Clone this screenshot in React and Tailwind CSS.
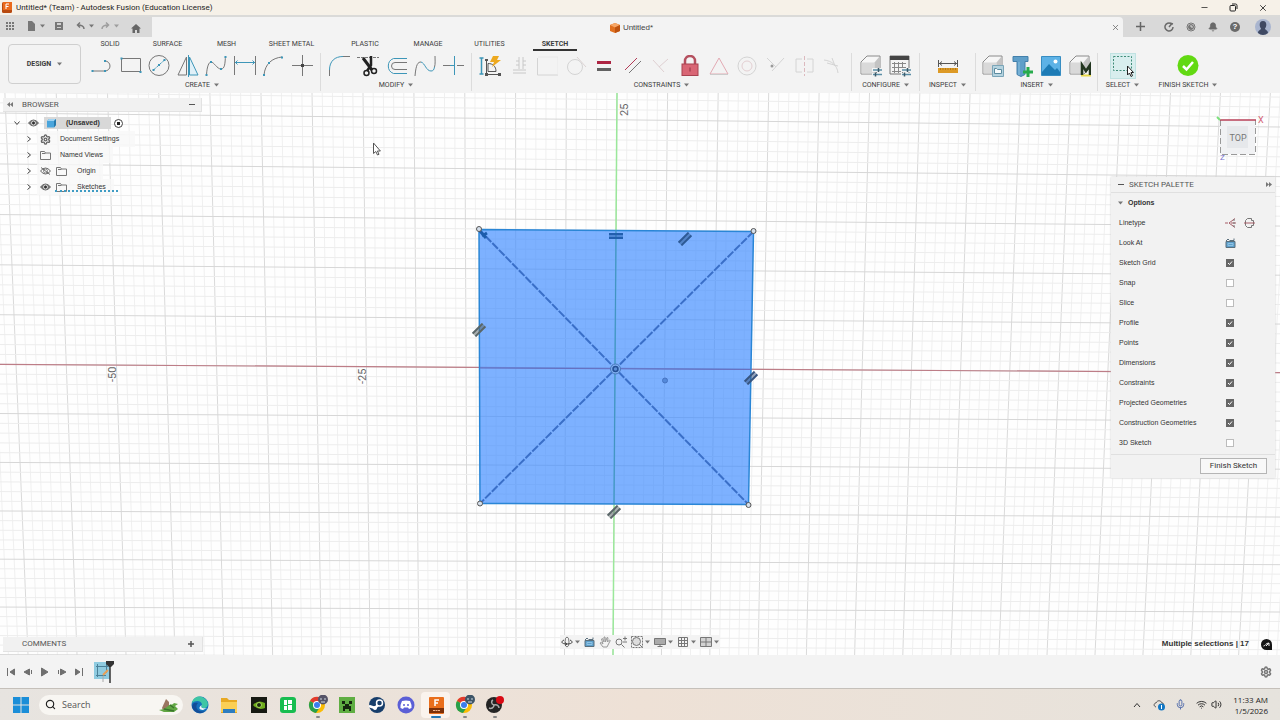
import { useState } from "react";
import { Bell, Mic, Minus, Search, Settings, Volume2, Wifi, X } from "lucide-react";

const TABS = [
  { name: "SOLID", width: "w-[56px]" },
  { name: "SURFACE", width: "w-[59px]" },
  { name: "MESH", width: "w-[59px]" },
  { name: "SHEET METAL", width: "w-[71px]" },
  { name: "PLASTIC", width: "w-[76px]" },
  { name: "MANAGE", width: "w-[50px]" },
  { name: "UTILITIES", width: "w-[73px]" },
];

const OPTIONS = [
  ["Sketch Grid", true],
  ["Snap", false],
  ["Slice", false],
  ["Profile", true],
  ["Points", true],
  ["Dimensions", true],
  ["Constraints", true],
  ["Projected Geometries", true],
  ["Construction Geometries", true],
  ["3D Sketch", false],
];

const BLUE = "#3d96b8";
const GREY = "#777";
const FAINT = "#d4d4d4";

function Caret({ className = "" }) {
  return (
    <svg viewBox="0 0 5 4" className={`w-[5px] h-1 shrink-0 ${className}`} fill="#777">
      <path d="M0 0.5h5L2.5 3.5z" />
    </svg>
  );
}

// toolbar icon on a 22px grid
function Tool({ label, children, active }) {
  return (
    <button
      aria-label={label}
      className={
        active
          ? "w-[26px] h-[26px] flex items-center justify-center bg-[#d8eeee] border border-[#c0e2e2]"
          : "w-[22px] h-[26px] flex items-center justify-center"
      }
    >
      <svg viewBox="0 0 22 22" className="w-[22px] h-[22px] shrink-0" fill="none" stroke={GREY} strokeWidth="1">
        {children}
      </svg>
    </button>
  );
}

function Group({ label, width, className = "", children }) {
  return (
    <div className={`flex flex-col items-center ${className}`}>
      <div className={`flex h-[26px] justify-between items-center ${width}`}>{children}</div>
      <button className="flex items-center gap-1 h-3 leading-3 whitespace-nowrap">
        {label}
        <Caret />
      </button>
    </div>
  );
}

function Dot({ x, y, color = BLUE }) {
  return <rect x={x - 1} y={y - 1} width="2" height="2" fill={color} stroke="none" />;
}

function CreateTools() {
  return (
    <>
      <Tool label="Line">
        <path d="M1 16h13a5 5 0 0 0 0-10" />
        <Dot x={1.5} y={16} /><Dot x={14} y={16} /><Dot x={14} y={6} />
      </Tool>
      <Tool label="Rectangle">
        <path d="M1.5 3.500h19v13h-19z" />
        <Dot x={1.5} y={3.5} /><Dot x={20.5} y={17} />
      </Tool>
      <Tool label="Circle">
        <circle cx="11" cy="10.500" r="10" />
        <path d="M5.500 15L16.500 5" stroke={BLUE} strokeDasharray="3 1" />
        <Dot x={5.5} y={15} /><Dot x={11} y={10} /><Dot x={16.5} y={5} />
      </Tool>
      <Tool label="Mirror">
        <path d="M9.500 2v18H1z" />
        <path d="M12.500 2v18H21z" stroke={BLUE} fill="#e0f0f8" />
        <path d="M11.500 0v22" stroke={BLUE} />
      </Tool>
      <Tool label="Spline">
        <path d="M1.500 20C2 11 4 7 6 7c3 0 6 7 10 7 4 0 4-6 4.500-13" />
        <Dot x={1.5} y={20} /><Dot x={6} y={7} /><Dot x={16} y={14} /><Dot x={20.5} y={2} />
      </Tool>
      <Tool label="Dimension">
        <path d="M.5 1v19M21.500 1v19" />
        <path d="M1 7.500h20M3.500 5.500l-2 2 2 2M18.500 5.500l2 2-2 2" stroke={BLUE} />
      </Tool>
      <Tool label="Arc">
        <path d="M2 20C3 9 10 3 20 2" />
        <Dot x={2} y={20} /><Dot x={7} y={8} /><Dot x={20} y={2.5} />
      </Tool>
      <Tool label="Point">
        <path d="M11.500 0v21M1 10.500h21" />
        <rect x="10" y="9" width="3" height="3" fill="#444" stroke="none" />
      </Tool>
    </>
  );
}

function ModifyTools() {
  return (
    <>
      <Tool label="Fillet">
        <path d="M1.500 21v-6M15 1.500h7" />
        <path d="M1.500 15C1.500 6 7 1.500 15 1.500" stroke={BLUE} />
      </Tool>
      <Tool label="Trim">
        <path d="M0 2.500h22" strokeDasharray="3 1" />
        <path d="M6 3l9 12" stroke="#222" strokeWidth="3" />
        <path d="M14 1v9l-4 6" stroke="#222" strokeWidth="2.500" />
        <circle cx="9.500" cy="18" r="2.500" stroke="#222" strokeWidth="1.500" />
        <circle cx="17" cy="16" r="2.500" stroke="#222" strokeWidth="1.500" />
      </Tool>
      <Tool label="Offset">
        <path d="M22 3.500H8.500a8 8 0 0 0 0 15H22" stroke={BLUE} />
        <path d="M22 7.500H10a3.500 3.500 0 0 0 0 7h12" />
      </Tool>
      <Tool label="Break">
        <path d="M1 21C2 9 4 7 7 7" />
        <path d="M7 7c4 1 5 9 10 9 2 0 3-1 3.500-4" stroke={BLUE} />
        <path d="M20.500 12c1-3 .5-7 .5-11" />
      </Tool>
      <Tool label="Extend">
        <path d="M1 10.500h7M15 10.500h7" />
        <path d="M8 10.500h5M12.500 1v19" stroke={BLUE} />
      </Tool>
    </>
  );
}

function ConstraintTools() {
  return (
    <>
      <Tool label="Automatic dimension">
        <path d="M2.500 3v16M.5 3h4M.5 19h4" stroke={BLUE} strokeWidth="1.500" />
        <path d="M7.500 19V5M7 19.500h14M9 16.500h8c0-5-3-8-8-8z" stroke="#555" />
        <path d="M6 4h3v2H6zM6 18h3v3H6zM19 18h3v3h-3z" fill="#555" stroke="none" />
        <path d="M14 1h6l-2 4h4l-9 7 2-5h-4z" fill="#eda91f" stroke="none" />
      </Tool>
      <Tool label="Coincident">
        <path d="M11 2v12M15 2v12M5 15h13M5 18h13M8 6h3M8 10h3M15 6h3M15 10h3" stroke="#c8c8c8" />
      </Tool>
      <Tool label="Horizontal">
        <path d="M1.500 3v17H22" stroke={FAINT} />
        <path d="M2 2h20v18" stroke="#e9e9e9" />
      </Tool>
      <Tool label="Tangent">
        <circle cx="10" cy="12" r="7.500" stroke={FAINT} />
        <path d="M12 2l9 10" stroke="#dcd3d3" />
      </Tool>
      <Tool label="Equal">
        <path d="M4 7.500h14" stroke="#ad2442" strokeWidth="3" />
        <path d="M4 14.500h14" stroke="#616161" strokeWidth="3" />
      </Tool>
      <Tool label="Parallel">
        <path d="M3 15L15 3" stroke="#b23b56" />
        <path d="M7 18L19 6" stroke="#777" />
      </Tool>
      <Tool label="Perpendicular">
        <path d="M3 5l11 12M9 12l9-8" stroke="#dfd0d2" />
      </Tool>
      <Tool label="Fix">
        <path d="M6 10V6a5 5 0 0 1 10 0v4" stroke="#b5505f" strokeWidth="2.500" />
        <rect x="3" y="9" width="16" height="11.500" fill="#d96675" stroke="#a84351" />
        <path d="M11 12.500v4" stroke="#8d3340" />
      </Tool>
      <Tool label="Midpoint">
        <path d="M11 3l9 16H2z" stroke="#e3aab3" />
        <path d="M2 19.500h18" stroke="#ccc" />
      </Tool>
      <Tool label="Concentric">
        <circle cx="11" cy="11" r="9" stroke={FAINT} />
        <circle cx="11" cy="11" r="5" stroke="#e3cfd2" />
      </Tool>
      <Tool label="Collinear">
        <path d="M2 3l9 9M7 16L19 3" stroke={FAINT} />
        <circle cx="7" cy="11" r="1.500" fill="#999" stroke="none" />
      </Tool>
      <Tool label="Symmetry">
        <path d="M9 4H3v13h6M14 4h6v13h-6" stroke={FAINT} />
        <path d="M11.500 1v20" stroke="#dcb9be" strokeDasharray="4 2" />
      </Tool>
      <Tool label="Curvature">
        <path d="M2 5c8 1 13 5 14 13M5 8l11 3M10 3l3 8" stroke={FAINT} />
      </Tool>
    </>
  );
}

function BoxShape() {
  return (
    <>
      <path d="M1 7l6-6h13v13l-5 5H1z" fill="#f6f6f6" stroke="#8a8a8a" />
      <path d="M1.500 7.500h13v11h-13z" fill="#d9d9d9" stroke="none" />
      <path d="M14.500 7.500l5-6v12l-5 5z" fill="#c3c3c3" stroke="none" />
    </>
  );
}

function Sliders() {
  return (
    <g strokeWidth="1.500">
      <path d="M12 15h10M12 20h10" stroke="#f3f3f3" strokeWidth="4" />
      <path d="M13 15h9M13 19.500h9" stroke="#5b8ea6" />
      <path d="M18.500 13v4M15.500 17.500v4" stroke="#3d5a68" />
    </g>
  );
}

function Ribbon() {
  return (
    <div className="flex bg-[#f3f3f3] h-14 shrink-0 font-['Roboto',sans-serif] text-[7px] text-[#3c3c3c] overflow-hidden">
      <button className="ml-2 mt-[7px] w-[73px] h-10 border border-[#cfcfcf] rounded-sm flex items-center justify-center gap-[6px] font-bold shrink-0">
        DESIGN
        <Caret />
      </button>
      <div className="flex flex-col">
        <nav className="flex h-[14px] pl-px">
          {TABS.map((tab) => (
            <button key={tab.name} className={`${tab.width} shrink-0 text-center whitespace-nowrap`}>
              {tab.name}
            </button>
          ))}
          <button className="ml-[7px] w-11 shrink-0 font-bold border-b-2 border-[#333] pt-[2px]">SKETCH</button>
        </nav>
        <div className="flex pl-[3px] mt-[2px]">
          <Group label="CREATE" width="w-[222px]" className="px-[7px] border-r border-[#dcdcdc]"><CreateTools /></Group>
          <Group label="MODIFY" width="w-[136px]" className="px-[7px] border-r border-[#dcdcdc]"><ModifyTools /></Group>
          <Group label="CONSTRAINTS" width="w-[365px]" className="px-[7px] border-r border-[#dcdcdc]"><ConstraintTools /></Group>
          <Group label="CONFIGURE" width="w-[51px]" className="px-2 border-r border-[#dcdcdc]">
            <Tool label="Configure model">
              <BoxShape />
              <Sliders />
            </Tool>
            <Tool label="Configuration table">
              <path d="M1 1h19v18H1z" fill="#f4f4f4" stroke="#777" />
              <path d="M1 1h19v4H1z" fill="#444" stroke="none" />
              <path d="M3 8.500h14M3 12.500h14M3 16.500h9M5.500 7v11M9.500 7v11M13.500 7v11" stroke="#888" />
              <Sliders />
            </Tool>
          </Group>
          <Group label="INSPECT" width="w-[22px]" className="w-14 border-r border-[#dcdcdc]">
            <Tool label="Measure">
              <path d="M1.500 5v7M20.500 5v7M2 8.500h18M5 6.500l-2.500 2 2.500 2M17 6.500l2.500 2-2.500 2" stroke="#555" />
              <path d="M1 13h20v5H1z" fill="#dd9a26" stroke="none" />
              <path d="M3 14h16" stroke="#8e5d0d" strokeDasharray="1 1.500" />
            </Tool>
          </Group>
          <Group label="INSERT" width="w-[109px]" className="px-[6px] border-r border-[#dcdcdc]">
            <Tool label="Insert derive">
              <BoxShape />
              <path d="M10.500 10.500h11v11h-11z" fill="#b5d3df" stroke="#7aa5b8" />
              <path d="M12.500 13.500h2l1 1h4v4h-7z" fill="#f7fbfc" stroke="#5b8ba0" />
            </Tool>
            <Tool label="Insert fastener">
              <path d="M2 1.500h15v5h-3v13l-4 2-4-2v-13H2z" fill="#5f9fc9" stroke="#4380ab" />
              <path d="M8 7v13" stroke="#8ec1e0" />
              <path d="M17 12v10M12 17h10" stroke="#27ab4c" strokeWidth="3" />
            </Tool>
            <Tool label="Insert canvas">
              <path d="M1.500 1.500h19v19h-19z" fill="#5db2e6" stroke="#378dc2" />
              <path d="M2 17l7-8 6 6 2-2 3 4v3H2z" fill="#1d7bb5" stroke="none" />
              <circle cx="15.500" cy="6.500" r="2" fill="#fff" stroke="none" />
            </Tool>
            <Tool label="Insert McMaster-Carr component">
              <BoxShape />
              <path d="M12 20.500h10" stroke="#e8d94a" strokeWidth="2" />
              <path d="M13 20V10l4 6 4-6v10" stroke="#22351f" strokeWidth="2.500" />
            </Tool>
          </Group>
          <Group label="SELECT" width="w-[26px]" className="w-[49px]">
            <Tool label="Select" active>
              <path d="M1.500 1.500h18v14h-18z" stroke="#3f8c78" strokeDasharray="2 1.500" />
              <path d="M15.500 11v9l2-2 1.500 3.500 1.500-.8-1.500-3.200h2.500z" fill="#fff" stroke="#222" />
            </Tool>
          </Group>
          <Group label="FINISH SKETCH" width="w-[22px]" className="w-[82px]">
            <Tool label="Finish sketch">
              <circle cx="11" cy="10.500" r="10.500" fill="#62d912" stroke="none" />
              <path d="M6 11l3.500 3.500L16 7" stroke="#fff" strokeWidth="2.500" />
            </Tool>
          </Group>
        </div>
      </div>
    </div>
  );
}

function TitleBar() {
  return (
    <header className="flex items-center h-[17px] bg-[#f6f1e8] border-b-2 border-[#dadad8] shrink-0 text-[#222]">
      <svg viewBox="0 0 10 11" className="w-[10px] h-[11px] ml-[2px]">
        <rect width="10" height="11" rx="1.500" fill="#b84a10" />
        <rect x="1" width="9" height="8" fill="#ea6a1c" />
        <path d="M4 7V2h3M4 4.500h2.500" stroke="#fff" fill="none" />
      </svg>
      <h1 className="ml-1 whitespace-nowrap text-[8px] font-['Roboto',sans-serif]">Untitled* (Team) - Autodesk Fusion (Education License)</h1>
      <div className="ml-auto flex items-center gap-[20px] pr-3">
        <button aria-label="Minimize"><Minus size={9} strokeWidth={2} /></button>
        <button aria-label="Restore">
          <svg viewBox="0 0 9 9" className="w-[9px] h-[9px]" fill="none" stroke="#222">
            <rect x="1" y="2.500" width="5.500" height="5.500" rx="1" />
            <path d="M3 1h3.500Q8 1 8 2.500V6" />
          </svg>
        </button>
        <button aria-label="Close"><X size={10} strokeWidth={2} /></button>
      </div>
    </header>
  );
}

function QuickBar() {
  return (
    <div className="flex h-5 shrink-0 bg-[#d9d9d9] font-['Liberation_Sans',sans-serif] text-[8px] text-[#444]">
      <div className="flex items-center w-[152px] pl-[5px] pb-[2px] shrink-0">
        <button aria-label="Data panel" className="w-[10px]">
          <svg viewBox="0 0 10 10" className="w-[10px] h-[10px]" fill="#777">
            {[0, 3, 6].map((y) => [1, 4, 7].map((x) => <rect key={`${x}-${y}`} x={x} y={y + 1} width="2" height="2" />))}
          </svg>
        </button>
        <button aria-label="File" className="flex items-center gap-1 ml-3">
          <svg viewBox="0 0 9 10" className="w-[9px] h-[10px]" fill="#777"><path d="M1 0h4l3 3v7H1z" /></svg>
          <Caret />
        </button>
        <button aria-label="Save" className="ml-[9px]">
          <svg viewBox="0 0 10 10" className="w-[10px] h-[10px]">
            <path d="M1 1h8v8H1z" fill="#777" />
            <path d="M3 2h4v2H3zM3 6h4v1H3z" fill="#d0d0d0" />
          </svg>
        </button>
        <button aria-label="Undo" className="flex items-center gap-1 ml-3">
          <svg viewBox="0 0 9 8" className="w-[9px] h-2" fill="none" stroke="#777" strokeWidth="1.500"><path d="M8 7C8 4 5 3 1.500 3M4 .5L1.500 3 4 5.500" /></svg>
          <Caret />
        </button>
        <button aria-label="Redo" className="flex items-center gap-1 ml-[7px] opacity-60">
          <svg viewBox="0 0 9 8" className="w-[9px] h-2" fill="none" stroke="#777" strokeWidth="1.500"><path d="M1 7c0-3 3-4 6.500-4M5 .5L7.500 3 5 5.500" /></svg>
          <Caret />
        </button>
        <button aria-label="Home" className="ml-3 mt-1">
          <svg viewBox="0 0 10 9" className="w-[10px] h-[9px]" fill="#666"><path d="M5 0l5 4.500H8.500V9h-2.500V6H4v3H1.500V4.500H0z" /></svg>
        </button>
      </div>
      <div className="flex flex-1 items-center bg-[#f3f3f3] rounded-tr-sm">
        <div className="flex flex-1 items-center justify-center gap-[3px] pt-[2px]">
          <svg viewBox="0 0 10 10" className="w-[10px] h-[10px]">
            <path d="M5 0l5 2v6L5 10 0 8V2z" fill="#e0701f" />
            <path d="M5 0l5 2-5 2.500L0 2z" fill="#f6a767" />
            <path d="M5 4.500L10 2v6l-5 2z" fill="#bd5210" />
          </svg>
          <span>Untitled*</span>
        </div>
        <button aria-label="Close document" className="mr-[3px]"><X size={9} strokeWidth={2} color="#666" /></button>
      </div>
      <div className="flex items-center w-[157px] pb-px shrink-0">
        <button aria-label="New design" className="ml-[13px]">
          <svg viewBox="0 0 9 9" className="w-[9px] h-[9px]" stroke="#666" strokeWidth="1.500"><path d="M4.500 0v9M0 4.500h9" /></svg>
        </button>
        <button aria-label="Extensions" className="ml-[19px]">
          <svg viewBox="0 0 10 10" className="w-[10px] h-[10px]" fill="none" stroke="#6a6a6a" strokeWidth="1.500"><path d="M7 1.500a4 4 0 1 0 2 3.500M5 5l3-3.500M6 1l3 1" /></svg>
        </button>
        <button aria-label="Job status" className="ml-3">
          <svg viewBox="0 0 10 10" className="w-[10px] h-[10px]" fill="none" stroke="#777"><circle cx="5" cy="5" r="4" /><circle cx="5" cy="5" r="2.500" fill="#777" /><path d="M5 3v2h2" stroke="#ddd" /></svg>
        </button>
        <button aria-label="Notifications" className="ml-3"><Bell size={10} fill="#6a6a6a" color="#6a6a6a" /></button>
        <button aria-label="Help" className="ml-3 w-[10px] h-[10px] rounded-full bg-[#6a6a6a] text-white leading-[10px] font-bold">?</button>
        <button aria-label="Profile" className="ml-[15px]">
          <svg viewBox="0 0 16 16" className="w-4 h-4">
            <circle cx="8" cy="8" r="8" fill="#a9b5cf" />
            <path d="M3 14c0-3 3-3 3-4.500C4 7 4 2 8 2s4 5 2 7.500c0 1.500 3 1.500 3 4.500-3 2.500-7 2.500-10 0z" fill="#3f4963" />
          </svg>
        </button>
      </div>
    </div>
  );
}

// The sketch plane is viewed almost straight on, so lines lean slightly with distance from the origin.
const vTop = (k) => 617 + 50.65 * k - 0.03 * k * k;
const vBottom = (k) => 613 + 48.45 * k - 0.025 * k * k;
const hLeft = (k) => 364.3 + 49.4 * k - 0.17 * k * k;
const hRight = (k) => 372.7 + 48.5 * k - 0.127 * k * k;

function Grid() {
  const lines = [];
  for (let n = -66; n <= 72; n++) {
    const k = n / 5;
    lines.push(
      <line key={`v${n}`} x1={vTop(k)} y1="93" x2={vBottom(k)} y2="655" stroke={n % 5 ? "#f0f0f0" : "#dadada"} />
    );
  }
  for (let n = -30; n <= 32; n++) {
    const k = n / 5;
    lines.push(
      <line key={`h${n}`} x1="0" y1={hLeft(k)} x2="1280" y2={hRight(k)} stroke={n % 5 ? "#ededed" : "#d7d7d7"} />
    );
  }
  return <g>{lines}</g>;
}

function ParallelGlyph({ x, y, flat, color = "#5a6668" }) {
  return (
    <g transform={`translate(${x} ${y}) rotate(${flat ? 0 : -45})`} stroke={color}>
      <path d="M-7 0h14" strokeWidth="5" opacity="0.500" />
      <path d="M-7 -2h14M-7 2h14" strokeWidth="2" />
    </g>
  );
}

function Viewport() {
  return (
    <svg viewBox="0 93 1280 562" preserveAspectRatio="xMidYMid slice" className="absolute inset-0 w-full h-full bg-[#fefefe]">
      <Grid />
      <path d="M617 93L613 655" stroke="#9be89b" strokeWidth="1.500" />
      <path d="M0 364.300L1280 372.700" stroke="#bd7d87" strokeWidth="1.200" />
      <g fontFamily="Roboto, sans-serif" fontSize="11" fill="#666">
        <text transform="translate(628 116) rotate(-90)">25</text>
        <text transform="translate(116 382) rotate(-90)">-50</text>
        <text transform="translate(366 384) rotate(-90)">-25</text>
      </g>
      <path d="M479 229.500L753.500 231.500 748.500 504.500 480 503.500z" fill="#3f8cff" fillOpacity="0.680" stroke="#2a86d6" strokeWidth="1.500" />
      <path d="M616 230L614 504" stroke="#4193c0" />
      <path d="M480 368L751 369.500" stroke="#6670c0" />
      <g stroke="#3a6fc8" strokeWidth="2" strokeDasharray="8 1.500">
        <path d="M479 229.500L748.500 504.500" />
        <path d="M753.500 231.500L480 503.500" />
      </g>
      <path d="M480 231l6 7M482 236l5-3" stroke="#1d5cab" strokeWidth="3" />
      <ParallelGlyph x={616} y={236} flat color="#215fae" />
      <ParallelGlyph x={685} y={239} color="#2d5a95" />
      <ParallelGlyph x={479} y={330} />
      <ParallelGlyph x={751} y={378} color="#375580" />
      <ParallelGlyph x={614} y={512} />
      <g fill="#d5dfeb" stroke="#555">
        <circle cx="479" cy="229" r="2.500" />
        <circle cx="753.500" cy="231" r="2.500" />
        <circle cx="480" cy="503.500" r="2.500" />
        <circle cx="748.500" cy="505" r="2.500" />
      </g>
      <circle cx="615.500" cy="369" r="5" fill="#7fb0f2" stroke="#4a78bd" />
      <circle cx="615.500" cy="369" r="2.500" fill="#5d8fd8" stroke="#244f96" strokeWidth="1.500" />
      <circle cx="665" cy="380.500" r="2.500" fill="#5489da" stroke="#4674c2" />
      <path d="M373.500 143v10.500l2.300-2 1.700 3.500 1.500-.7-1.600-3.300h3z" fill="#fff" stroke="#555" />
    </svg>
  );
}

function ViewCube() {
  return (
    <svg viewBox="0 0 50 50" className="absolute right-[15px] top-5 w-[50px] h-[50px]" fontFamily="Roboto, sans-serif">
      <path d="M5 7h35v34H5z" fill="#f1f2f4" />
      <path d="M12 13h21v22H12z" fill="#e6e8eb" />
      <path d="M5.500 7v34.500h35V7" fill="none" stroke="#999" strokeDasharray="6 3" />
      <path d="M5 7h36" stroke="#b84058" strokeWidth="1.500" />
      <path d="M2 4l3 3" stroke="#7be07b" strokeWidth="2" />
      <text x="23" y="28" textAnchor="middle" fontSize="9" fill="#777">TOP</text>
      <text x="43" y="10" fontSize="9" fill="#d35d72">X</text>
      <text x="5" y="47" fontSize="8" fill="#7a72cc">Z</text>
    </svg>
  );
}

function Chevron({ open }) {
  return (
    <svg viewBox="0 0 6 6" className="w-[6px] h-[6px] shrink-0" fill="none" stroke="#444">
      <path d={open ? "M.5 1.500L3 4.500l2.500-3" : "M1.500.5L4.500 3l-3 2.500"} />
    </svg>
  );
}

function Eye({ hidden }) {
  return (
    <svg viewBox="0 0 11 8" className="w-[11px] h-2 shrink-0" fill="none" stroke="#666">
      <path d="M.5 4Q5.500-2 10.500 4 5.500 10 .5 4z" fill={hidden ? "none" : "#777"} />
      <circle cx="5.500" cy="4" r="2" fill={hidden ? "none" : "#333"} stroke={hidden ? "#888" : "#ddd"} />
      {hidden && <path d="M1 .5l9 7" />}
    </svg>
  );
}

function Folder() {
  return (
    <svg viewBox="0 0 11 9" className="w-[11px] h-[9px] shrink-0" fill="none" stroke="#777">
      <path d="M.5 8.500v-8h4l1 1.500h5v6.500z" />
      <path d="M5.500 2.500H2" />
    </svg>
  );
}

function TreeRow({ label, children, width, gap = "ml-[9px]" }) {
  return (
    <li className="flex items-center h-4 pl-[23px]">
      <button aria-label={`Expand ${label}`} className="flex"><Chevron /></button>
      <div className={`flex items-center h-4 ml-[5px] bg-[#f8f8f8]/80 ${width}`}>
        <div className="flex items-center gap-[5px] pl-[3px]">{children}</div>
        <span className={`${gap} whitespace-nowrap`}>{label}</span>
      </div>
    </li>
  );
}

function Browser() {
  return (
    <aside className="absolute left-[3px] top-[5px] w-[199px] text-[7px] text-[#333]">
      <div className="flex items-center h-[14px] bg-[#f1f1f1] border-b border-r border-[#e2e2e2] px-1">
        <svg viewBox="0 0 6 5" className="w-[6px] h-[5px]" fill="#777"><path d="M3 0v5L0 2.500zM6 0v5L3 2.500z" /></svg>
        <h2 className="ml-[9px] text-[8px] font-['Roboto',sans-serif] text-[#555]">BROWSER</h2>
        <button aria-label="Collapse browser" className="ml-auto mr-[2px]">
          <svg viewBox="0 0 6 2" className="w-[6px] h-[2px]"><path d="M0 0h6v1H0z" fill="#555" /></svg>
        </button>
      </div>
      <ul className="pt-[3px]">
        <li className="flex items-center h-4 pl-[11px]">
          <Chevron open />
          <span className="ml-2"><Eye /></span>
          <div className="flex items-center h-3 w-[67px] ml-[5px] bg-[#d8d8d8]">
            <svg viewBox="0 0 10 10" className="w-[10px] h-[10px] ml-[2px]">
              <path d="M1 3l2-2h7v6L8 9.500H1z" fill="#4aa5dc" />
              <path d="M1 3l2-2h7L8 3z" fill="#9fd3f2" />
              <path d="M8 3l2-2v6L8 9.500z" fill="#2779ab" />
            </svg>
            <strong className="ml-[10px]">(Unsaved)</strong>
          </div>
          <input type="radio" aria-label="Activate component" defaultChecked className="ml-[3px] appearance-none w-[9px] h-[9px] rounded-full border border-[#444] bg-[radial-gradient(#222_30%,#fff_35%)]" />
        </li>
        <TreeRow label="Document Settings" width="w-[98px]"><Settings size={11} strokeWidth={3} color="#666" /></TreeRow>
        <TreeRow label="Named Views" width="w-[76px]"><Folder /></TreeRow>
        <TreeRow label="Origin" width="w-[66px]" gap="ml-[10px]"><Eye hidden /><Folder /></TreeRow>
        <li className="relative">
          <ul><TreeRow label="Sketches" width="w-[77px]" gap="ml-[10px]"><Eye /><Folder /></TreeRow></ul>
          <span className="absolute left-[52px] bottom-[3px] w-[63px] border-b-2 border-dotted border-[#3f9cc4]"></span>
        </li>
      </ul>
    </aside>
  );
}

function Palette() {
  const [options, setOptions] = useState(OPTIONS);

  const toggle = (index) => {
    setOptions(options.map(([name, on], i) => [name, i === index ? !on : on]));
  };

  return (
    <aside className="absolute right-[5px] top-[84px] w-[164px] bg-[#f2f2f2] shadow-[0_0_2px_#ccc] text-[7px] text-[#333]">
      <div className="flex items-center h-4 px-[7px] border-b border-[#e0e0e0]">
        <svg viewBox="0 0 6 2" className="w-[6px] h-[2px]"><path d="M0 0h6v1H0z" fill="#555" /></svg>
        <h2 className="ml-[5px] text-[8px] font-['Roboto',sans-serif] text-[#555]">SKETCH PALETTE</h2>
        <svg viewBox="0 0 6 5" className="w-[6px] h-[5px] ml-auto -mr-1" fill="#777"><path d="M0 0v5l3-2.500zM3 0v5l3-2.500z" /></svg>
      </div>
      <button className="flex items-center h-5 pl-[7px] gap-[5px] font-bold">
        <Caret />
        Options
      </button>
      <div className="flex items-center h-5 pl-2">
        <span className="w-[106px]">Linetype</span>
        <button aria-label="Construction">
          <svg viewBox="0 0 11 10" className="w-[11px] h-[10px]" fill="none" stroke="#a65c66"><path d="M0 5h3M10 .5L4 5l6 4.500M6 5h5" /><path d="M9 1v8" stroke="#777" strokeDasharray="2 1" /></svg>
        </button>
        <button aria-label="Centerline" className="ml-2">
          <svg viewBox="0 0 11 10" className="w-[11px] h-[10px]" fill="none" stroke="#777"><path d="M3.500.5h4v2h2v5h-2v2h-4l-2-2v-5z" /><path d="M0 5h11" stroke="#a65c66" /></svg>
        </button>
      </div>
      <div className="flex items-center h-5 pl-2">
        <span className="w-[106px]">Look At</span>
        <button aria-label="Look At"><LookAt /></button>
      </div>
      {options.map(([name, on], i) => (
        <label key={name} className="flex items-center h-5 pl-2">
          <span className="w-[107px] whitespace-nowrap">{name}</span>
          <span className="relative flex">
            <input
              type="checkbox"
              checked={on}
              onChange={() => toggle(i)}
              className="appearance-none w-2 h-2 border border-[#bcbcbc] bg-white checked:bg-[#666] checked:border-[#666]"
            />
            {on && (
              <svg viewBox="0 0 8 8" className="absolute inset-0 w-2 h-2 pointer-events-none" fill="none" stroke="#fff">
                <path d="M2 4l1.500 1.500L6 2.500" />
              </svg>
            )}
          </span>
        </label>
      ))}
      <div className="flex justify-end h-6 pt-[3px] pr-2 mt-px border-t border-[#e0e0e0]">
        <button className="w-[67px] h-4 bg-[#f8f8f8] border border-[#b5b5b5] text-[8px] font-['Roboto',sans-serif]">Finish Sketch</button>
      </div>
    </aside>
  );
}

function LookAt() {
  return (
    <svg viewBox="0 0 11 10" className="w-[11px] h-[10px]" fill="none" stroke="#5a6f7c">
      <path d="M1 3.500h9v6H1z" fill="#5d9fcb" />
      <path d="M3 5.500h5v2H3z" stroke="#8fc3e4" />
      <path d="M1 3l2-2 1.500 1.500M5 2.500h4v-2" />
    </svg>
  );
}

function NavIcon({ label, caret, children }) {
  return (
    <button aria-label={label} className="flex items-center gap-[2px]">
      <svg viewBox="0 0 12 12" className="w-3 h-3" fill="none" stroke="#777">{children}</svg>
      {caret && <Caret />}
    </button>
  );
}

function NavBar() {
  return (
    <div className="absolute left-1/2 -translate-x-1/2 bottom-[6px] flex items-center h-[14px] px-px gap-1 bg-[#f3f3f3]">
      <NavIcon label="Orbit" caret>
        <ellipse cx="6" cy="6" rx="2" ry="5" />
        <path d="M3 4C-1 6 1 8 6 8s7-2 3-4M4 6.500L6 8 4 9.500" stroke="#444" />
      </NavIcon>
      <button aria-label="Look At"><LookAt /></button>
      <NavIcon label="Pan">
        <path d="M4 11L1 7l1-.5L4 8 2.500 3l1-.5L5 6V1h1l.5 5L8 1.500l1 .3L8.500 6 10.500 4l.8.5L9 9l-1 2z" stroke="#999" />
      </NavIcon>
      <NavIcon label="Zoom">
        <circle cx="4" cy="6" r="3" />
        <path d="M6.500 8.500l3 3M8 2.500h4M10 .5v4M8 6h4" />
      </NavIcon>
      <NavIcon label="Fit" caret>
        <path d="M.5.500h11v11H.5z" strokeDasharray="2 1" />
        <circle cx="5.500" cy="5.500" r="4" fill="#ddd" />
        <path d="M8.500 8.500l3 3" />
      </NavIcon>
      <NavIcon label="Display settings" caret>
        <path d="M.5 2.500h11v6H.5z" fill="#aaa" />
        <path d="M6 8.500v2M3.500 10.500h5" />
      </NavIcon>
      <NavIcon label="Grid and snaps" caret>
        <path d="M1.500 1.500h9v9h-9zM4.500 1.500v9M7.500 1.500v9M1.500 4.500h9M1.500 7.500h9" />
      </NavIcon>
      <NavIcon label="Viewports" caret>
        <path d="M.5 1.500h11v9H.5zM6 1.500v9M.5 6h11" fill="#d2d2d2" />
      </NavIcon>
    </div>
  );
}

function Timeline() {
  const controls = [
    ["Go to start", "M1.500 1v8M8.500 2v6L4 5z"],
    ["Step back", "M6.500 2v6L1 5zM8.500 3v4"],
    ["Play", "M1.500 1v8l6.500-4z"],
    ["Step forward", "M3.500 2v6L9 5zM1.500 3v4"],
    ["Go to end", "M8.500 1v8M1.500 2v6L6 5z"],
  ];
  return (
    <footer className="flex items-center h-[33px] shrink-0 bg-[#f3f3f3] pl-[6px] pr-2">
      <div className="flex gap-[7px]">
        {controls.map(([label, d]) => (
          <button key={label} aria-label={label}>
            <svg viewBox="0 0 10 10" className="w-[10px] h-[10px]" fill="#6f6f6f" stroke="#6f6f6f"><path d={d} /></svg>
          </button>
        ))}
      </div>
      <button aria-label="Sketch1" className="ml-[10px]">
        <svg viewBox="0 0 21 22" className="w-[21px] h-[22px]">
          <rect y="1" width="16" height="17" fill="#8fcbe0" />
          <path d="M2 5.500h12M2 14.500h10M3.500 3v13M12.500 3v9" stroke="#4a8199" fill="none" />
          <path d="M9 14l5-5" stroke="#e9a055" strokeWidth="2" />
          <path d="M12 0h8v3l-3 3h-2l-3-3z" fill="#333" />
          <path d="M16 4v18" stroke="#333" strokeWidth="1.500" />
          <path d="M9 15v6" stroke="#aaa" />
        </svg>
      </button>
      <button aria-label="Timeline settings" className="ml-auto"><Settings size={12} strokeWidth={3} color="#777" /></button>
    </footer>
  );
}

function Chrome({ badge }) {
  return (
    <>
      <circle cx="9" cy="10" r="8" fill="#fbbc05" />
      <path d="M9 10L2 6a8 8 0 0 1 14 0z" fill="#e23b2e" />
      <path d="M9 10L2 6a8 8 0 0 0 6 12l4-6z" fill="#28a04c" />
      <circle cx="9" cy="10" r="4" fill="#fff" />
      <circle cx="9" cy="10" r="3" fill="#3b7ded" />
      <circle cx="15" cy="4.500" r="5" fill={badge} />
      <path d="M12 4h2M16 4h2M13 7h4" stroke="#cfdbe2" />
    </>
  );
}

const APPS = [
  ["Edge", null, (
    <>
      <circle cx="10" cy="10" r="8.500" fill="#1572bd" />
      <path d="M2 8C3 2 9 0 14 3c5 3 5 9 1 10-3 .5-5-1-3-3 0-5-7-5-10-2z" fill="#3fc6a5" />
      <path d="M8 8c-4 4 0 10 7 8-4 4-11 2-13-4 0-4 3-5 6-4z" fill="#134d98" />
      <path d="M12 10c-2 2 0 4 5 3l-4 2c-4 0-5-3-1-5z" fill="#f0f7fa" />
    </>
  )],
  ["File Explorer", null, (
    <>
      <path d="M2 3h6l2 2h8v13H2z" fill="#e8a923" />
      <path d="M2 7h16v10H2z" fill="#fbcf55" />
      <path d="M4 14h12v4H4z" fill="#2d7dc0" />
    </>
  )],
  ["NVIDIA", null, (
    <>
      <path d="M2 2h16v16H2z" fill="#171a13" />
      <path d="M4 10q5-6 12-2v5q-7 3-12-3z" fill="#6fae1b" />
      <circle cx="10" cy="10" r="2.500" fill="#1b2a0c" stroke="#a9d95f" />
    </>
  )],
  ["Green app", null, (
    <>
      <rect x="2" y="2" width="16" height="16" rx="3" fill="#18bd50" />
      <path d="M6 5h3v5H6zM10 5h4v4h-4zM6 11h3v4H6zM10 10h4v5h-4z" fill="#fff" />
    </>
  )],
  ["Chrome", "idle", <Chrome badge="#565468" />],
  ["Minecraft", null, (
    <>
      <path d="M2 2h16v16H2z" fill="#5fae43" />
      <path d="M5 6h3v3H5zM12 6h3v3h-3zM8 9h4v2h2v5h-2v-2H8v2H6v-5h2z" fill="#15270f" />
    </>
  )],
  ["Steam", null, (
    <>
      <circle cx="10" cy="10" r="8" fill="#173e6b" />
      <path d="M2 11l6 2 4-4" stroke="#fff" strokeWidth="2.500" fill="none" />
      <circle cx="12.500" cy="8" r="3" fill="#173e6b" stroke="#fff" strokeWidth="1.500" />
      <circle cx="8" cy="13" r="2" fill="#fff" />
    </>
  )],
  ["Discord", null, (
    <>
      <circle cx="10" cy="10" r="8.500" fill="#5b5fd6" />
      <path d="M6 6q4-1 8 0 2 4 1.500 7l-2.500 1-1-1.500H8L7 14l-2.500-1Q4 10 6 6z" fill="#fff" />
      <circle cx="8" cy="10" r="1" fill="#5b5fd6" /><circle cx="12" cy="10" r="1" fill="#5b5fd6" />
    </>
  )],
  ["Fusion", "active", (
    <>
      <rect x="3" y="2" width="15" height="17" rx="1" fill="#e96f1d" />
      <path d="M3 13h15v5H3z" fill="#7c3008" />
      <path d="M9 11V5h4M9 8h3" stroke="#fff" strokeWidth="1.500" fill="none" />
      <path d="M7 15.500h7" stroke="#f4b58a" strokeDasharray="2 .5" />
    </>
  )],
  ["Chrome profile 2", "idle", <Chrome badge="#3e5568" />],
  ["OBS", "idle", (
    <>
      <circle cx="9" cy="10" r="8" fill="#242424" />
      <path d="M9 10c-3-1-3-4-1-5M9 10c3-1 5 1 5 3M9 10c0 3-3 4-5 3" stroke="#aaa" strokeWidth="1.500" fill="none" />
      <circle cx="15" cy="5" r="4" fill="#d90a14" />
    </>
  )],
];

function Taskbar() {
  return (
    <footer className="flex items-center h-8 shrink-0 border-t border-[#c5c0ba] bg-linear-to-r from-[#e7e4e0] via-[#eee1d6] to-[#e6e3dd] text-[8px] font-['Open_Sans',sans-serif] text-[#222]">
      <button aria-label="Start" className="ml-[13px]">
        <svg viewBox="0 0 16 16" className="w-4 h-4" fill="#1b8ed8"><path d="M0 0h7.500v7.500H0zM8.500 0H16v7.500H8.500zM0 8.500h7.500V16H0zM8.500 8.500H16V16H8.500z" /></svg>
      </button>
      <label className="flex items-center w-36 h-5 ml-[10px] pl-[6px] pr-1 rounded-full bg-[#f8f6f2]">
        <Search size={11} strokeWidth={2.5} className="shrink-0" />
        <input type="text" aria-label="Search" placeholder="Search" className="flex-1 min-w-0 ml-[6px] text-[9px] outline-none placeholder:text-[#555]" />
        <svg viewBox="0 0 20 16" className="w-5 h-4 shrink-0">
          <path d="M3 11l4-9 3 3v7l-5 3z" fill="#9a7560" />
          <path d="M9 9c3-3 4 0 6-3l4 1-3 2 3 3-4 3H5l-5-2 5-1z" fill="#62a744" />
          <path d="M5 12l10 2M11 8l4 3" stroke="#39752c" strokeWidth="1.500" />
        </svg>
      </label>
      <div className="flex ml-[2px]">
        {APPS.map(([name, state, art], i) => (
          <button
            key={name}
            aria-label={name}
            className={`relative flex items-center justify-center h-[26px] ${i % 2 ? "w-[30px]" : "w-[29px]"} ${state === "active" ? "bg-[#faf3ed] rounded-sm" : ""}`}
          >
            <svg viewBox="0 0 20 20" className="w-5 h-5">{art}</svg>
            {state === "active" && <span className="absolute bottom-0 w-[10px] h-[2px] rounded-full bg-[#2277b5]"></span>}
            {state === "idle" && <span className="absolute bottom-0 w-1 h-[2px] rounded-full bg-[#888]"></span>}
          </button>
        ))}
      </div>
      <div className="flex items-center ml-auto pr-3">
        <svg viewBox="0 0 8 6" className="w-2 h-[6px]" fill="none" stroke="#333"><path d="M1 5l3-3.500L7 5" /></svg>
        <svg viewBox="0 0 12 12" className="w-3 h-3 ml-3">
          <path d="M3 8C0 7 1 4 3 4c1-3 5-3 6 0 2 0 2 2 1 3" stroke="#555" fill="none" />
          <circle cx="8.500" cy="8" r="3.500" fill="#1277c4" /><path d="M8.500 6v4" stroke="#fff" />
        </svg>
        <Mic size={11} color="#4a66a8" className="ml-[10px]" />
        <Wifi size={11} className="ml-[10px]" />
        <Volume2 size={11} className="ml-1" />
        <div className="ml-3 w-[34px] flex flex-col items-end leading-[11px] whitespace-nowrap">
          <div>11:33 AM</div>
          <div>1/5/2026</div>
        </div>
      </div>
    </footer>
  );
}

function App() {
  return (
    <div className="flex flex-col h-screen overflow-hidden font-['Liberation_Sans',sans-serif]">
      <TitleBar />
      <QuickBar />
      <Ribbon />
      <main className="relative flex-1 min-h-0 overflow-hidden">
        <Viewport />
        <ViewCube />
        <Browser />
        <Palette />
        <div className="absolute left-[3px] bottom-[3px] flex items-center w-[200px] h-[15px] pl-[19px] pr-2 bg-[#f1f1f1] border-b border-r border-[#e2e2e2]">
          <h2 className="text-[8px] font-['Roboto',sans-serif] text-[#555]">COMMENTS</h2>
          <button aria-label="Add comment" className="ml-auto">
            <svg viewBox="0 0 6 6" className="w-[6px] h-[6px]" stroke="#555" strokeWidth="1.500"><path d="M3 0v6M0 3h6" /></svg>
          </button>
        </div>
        <NavBar />
        <div className="absolute right-2 bottom-[5px] flex items-center gap-3 text-[8px] font-bold text-[#333]">
          <span>Multiple selections | 17</span>
          <button aria-label="Assistant">
            <svg viewBox="0 0 11 11" className="w-[11px] h-[11px]"><path d="M5.500 0a5.500 5.500 0 1 0 0 11H11V5.500A5.500 5.500 0 0 0 5.500 0z" fill="#151515" /><path d="M2.500 7c2 0 2-3 5.500-3M5 7l3-3v3" stroke="#eee" fill="none" /></svg>
          </button>
        </div>
      </main>
      <Timeline />
      <Taskbar />
    </div>
  );
}

export default App;
